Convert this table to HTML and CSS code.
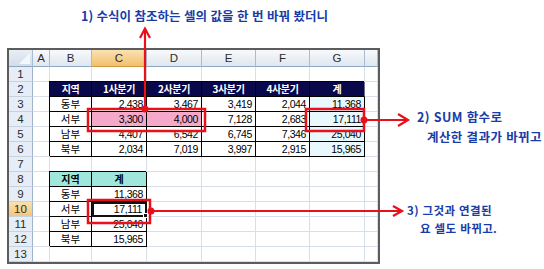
FILE: index.html
```html
<!DOCTYPE html>
<html lang="ko">
<head>
<meta charset="utf-8">
<link rel="stylesheet" href="styles.css">
</head>
<body>
<div class="page">
  <p class="title">1) 수식이 참조하는 셀의 값을 한 번 바꿔 봤더니</p>
  <div class="sheet">
    <div class="c corner"><i></i></div><div class="c ch">A</div><div class="c ch">B</div><div class="c ch sel">C</div><div class="c ch">D</div><div class="c ch">E</div><div class="c ch">F</div><div class="c ch">G</div><div class="c ch"></div>

    <div class="c rh">1</div><div class="c"></div><div class="c"></div><div class="c"></div><div class="c"></div><div class="c"></div><div class="c"></div><div class="c"></div><div class="c"></div>

    <div class="c rh">2</div><div class="c"></div><div class="c th">지역</div><div class="c th">1사분기</div><div class="c th">2사분기</div><div class="c th">3사분기</div><div class="c th">4사분기</div><div class="c th">계</div><div class="c"></div>

    <div class="c rh">3</div><div class="c"></div><div class="c t ko">동부</div><div class="c t n">2,438</div><div class="c t n">3,467</div><div class="c t n">3,419</div><div class="c t n">2,044</div><div class="c t n sum">11,368</div><div class="c"></div>

    <div class="c rh">4</div><div class="c"></div><div class="c t ko">서부</div><div class="c t n pink">3,300</div><div class="c t n pink">4,000</div><div class="c t n">7,128</div><div class="c t n">2,683</div><div class="c t n sum">17,111</div><div class="c"></div>

    <div class="c rh">5</div><div class="c"></div><div class="c t ko">남부</div><div class="c t n">4,407</div><div class="c t n">6,542</div><div class="c t n">6,745</div><div class="c t n">7,346</div><div class="c t n sum">25,040</div><div class="c"></div>

    <div class="c rh">6</div><div class="c"></div><div class="c t ko">북부</div><div class="c t n">2,034</div><div class="c t n">7,019</div><div class="c t n">3,997</div><div class="c t n">2,915</div><div class="c t n sum">15,965</div><div class="c"></div>

    <div class="c rh">7</div><div class="c"></div><div class="c"></div><div class="c"></div><div class="c"></div><div class="c"></div><div class="c"></div><div class="c"></div><div class="c"></div>

    <div class="c rh">8</div><div class="c"></div><div class="c t th2">지역</div><div class="c t th2">계</div><div class="c"></div><div class="c"></div><div class="c"></div><div class="c"></div><div class="c"></div>

    <div class="c rh">9</div><div class="c"></div><div class="c t ko">동부</div><div class="c t n">11,368</div><div class="c"></div><div class="c"></div><div class="c"></div><div class="c"></div><div class="c"></div>

    <div class="c rh sel">10</div><div class="c"></div><div class="c t ko">서부</div><div class="c t n active">17,111<b class="handle"></b></div><div class="c"></div><div class="c"></div><div class="c"></div><div class="c"></div><div class="c"></div>

    <div class="c rh">11</div><div class="c"></div><div class="c t ko">남부</div><div class="c t n">25,040</div><div class="c"></div><div class="c"></div><div class="c"></div><div class="c"></div><div class="c"></div>

    <div class="c rh">12</div><div class="c"></div><div class="c t ko">북부</div><div class="c t n">15,965</div><div class="c"></div><div class="c"></div><div class="c"></div><div class="c"></div><div class="c"></div>

    <div class="c rh">13</div><div class="c"></div><div class="c"></div><div class="c"></div><div class="c"></div><div class="c"></div><div class="c"></div><div class="c"></div><div class="c"></div>
  </div>

  <div class="note note2">
    <p class="l1">2) SUM 함수로</p>
    <p class="l2">계산한 결과가 바뀌고</p>
  </div>
  <div class="note note3">
    <p class="l1">3) 그것과 연결된</p>
    <p class="l2">요 셀도 바뀌고.</p>
  </div>

  <svg class="marks" width="544" height="269" viewBox="0 0 544 269">
    <g fill="none" stroke="#e8101a" stroke-width="2.5">
      <rect x="88" y="109" width="117" height="22"/>
      <rect x="306" y="109" width="58" height="22"/>
      <rect x="88" y="200" width="62" height="23"/>
    </g>
    <g fill="none" stroke="#e8101a" stroke-width="2.2" stroke-linejoin="miter">
      <line x1="145" y1="109" x2="145" y2="29"/>
      <polyline points="140,38 145,28.5 150,38"/>
      <line x1="364" y1="120" x2="407" y2="120"/>
      <polyline points="398,114 408,120 398,126"/>
      <line x1="151" y1="211" x2="401" y2="211"/>
      <polyline points="393,206 402,211 393,216"/>
    </g>
    <g fill="#e8101a">
      <circle cx="145" cy="109" r="3.5"/>
      <circle cx="364" cy="120" r="3.5"/>
      <circle cx="151" cy="211" r="3.5"/>
    </g>
  </svg>
</div>
</body>
</html>
```

FILE: styles.css
```css
html, body {
  margin: 0;
  padding: 0;
  background: #ffffff;
}

.page {
  position: relative;
  width: 544px;
  height: 269px;
  overflow: hidden;
  font-family: "Noto Sans CJK KR", "Liberation Sans", sans-serif;
}

.title {
  margin: 0;
  padding: 8px 0 0 81px;
  height: 16px;
  line-height: 16px;
  font-size: 12.5px;
  font-weight: 700;
  color: #1a3ca6;
  letter-spacing: 0;
}

.sheet {
  margin: 24px 0 0 7px;
  width: 369px;
  border: 2px solid #5c5c5c;
  display: grid;
  grid-template-columns: 24px 17px 42px 55px 55px 54px 54px 55px 13px;
  grid-template-rows: 17px repeat(13, 15px);
  background: #ffffff;
}

.c {
  box-sizing: border-box;
  border-right: 1px solid #d9dfea;
  border-bottom: 1px solid #d9dfea;
  font-family: "Liberation Sans", "Noto Sans CJK KR", sans-serif;
  font-size: 10.5px;
  line-height: 14px;
  color: #000;
  white-space: nowrap;
  overflow: hidden;
}

.ch {
  background: linear-gradient(#f7f9fc, #dfe6ef);
  border-right: 1px solid #a9bcd2;
  border-bottom: 1px solid #8ea7c3;
  text-align: center;
  line-height: 16px;
  font-size: 11.5px;
  color: #2b2b2b;
}

.ch.sel {
  background: linear-gradient(#fbe1b4, #f2c06a);
  border-bottom-color: #c89a48;
}

.corner {
  background: linear-gradient(#e9eef6, #d3dce9);
  border-right: 1px solid #a9bcd2;
  border-bottom: 1px solid #8ea7c3;
  display: flex;
  align-items: flex-end;
  justify-content: flex-end;
  padding: 0 2px 2px 0;
}

.corner i {
  display: block;
  width: 0;
  height: 0;
  border-left: 11px solid transparent;
  border-bottom: 11px solid #f4f7fb;
}

.rh {
  background: #e6edf7;
  border-right: 1px solid #9fb4cc;
  border-bottom: 1px solid #c5d2e2;
  text-align: center;
  font-size: 11.5px;
  color: #2b2b2b;
}

.rh.sel {
  background: linear-gradient(#fbe0b0, #f4c777);
}

.t {
  border-right: 1px solid #000;
  border-bottom: 1px solid #000;
  box-shadow: -1px -1px 0 0 #000;
}

.th {
  background: #08084a;
  color: #ffffff;
  font-family: "Noto Sans CJK KR", sans-serif;
  font-weight: 700;
  font-size: 10px;
  letter-spacing: -0.4px;
  text-align: center;
  border-right: 1px solid #6b6b8c;
  border-bottom: 1px solid #000;
  box-shadow: -1px -1px 0 0 #000;
}

.th2 {
  background: #9fe6dc;
  font-family: "Noto Sans CJK KR", sans-serif;
  font-weight: 700;
  font-size: 10px;
  text-align: center;
}

.ko {
  font-family: "Noto Sans CJK KR", sans-serif;
  font-size: 10.5px;
  text-align: center;
}

.n {
  text-align: right;
  padding-right: 3px;
  letter-spacing: -0.4px;
}

.sum {
  background: #e8f8fd;
}

.pink {
  background: #f4a9cb;
}

.active {
  position: relative;
  outline: 2px solid #111;
  outline-offset: -2px;
  overflow: visible;
  padding-right: 4px;
}

.handle {
  position: absolute;
  right: -2px;
  bottom: -2px;
  width: 3px;
  height: 3px;
  background: #111;
  border: 1px solid #fff;
}

.note {
  position: absolute;
  color: #1a3ca6;
  font-weight: 700;
}

.note p {
  margin: 0;
  white-space: nowrap;
}

.note2 {
  left: 417px;
  top: 109px;
  font-size: 12.5px;
  line-height: 16px;
  letter-spacing: 0.4px;
}

.note2 .l2 {
  margin-top: 4px;
  padding-left: 10px;
}

.note3 {
  left: 407px;
  top: 203px;
  font-size: 11.5px;
  line-height: 15px;
  letter-spacing: 0.4px;
}

.note3 .l2 {
  margin-top: 3px;
  padding-left: 13px;
}

.marks {
  position: absolute;
  left: 0;
  top: 0;
  pointer-events: none;
}
```
